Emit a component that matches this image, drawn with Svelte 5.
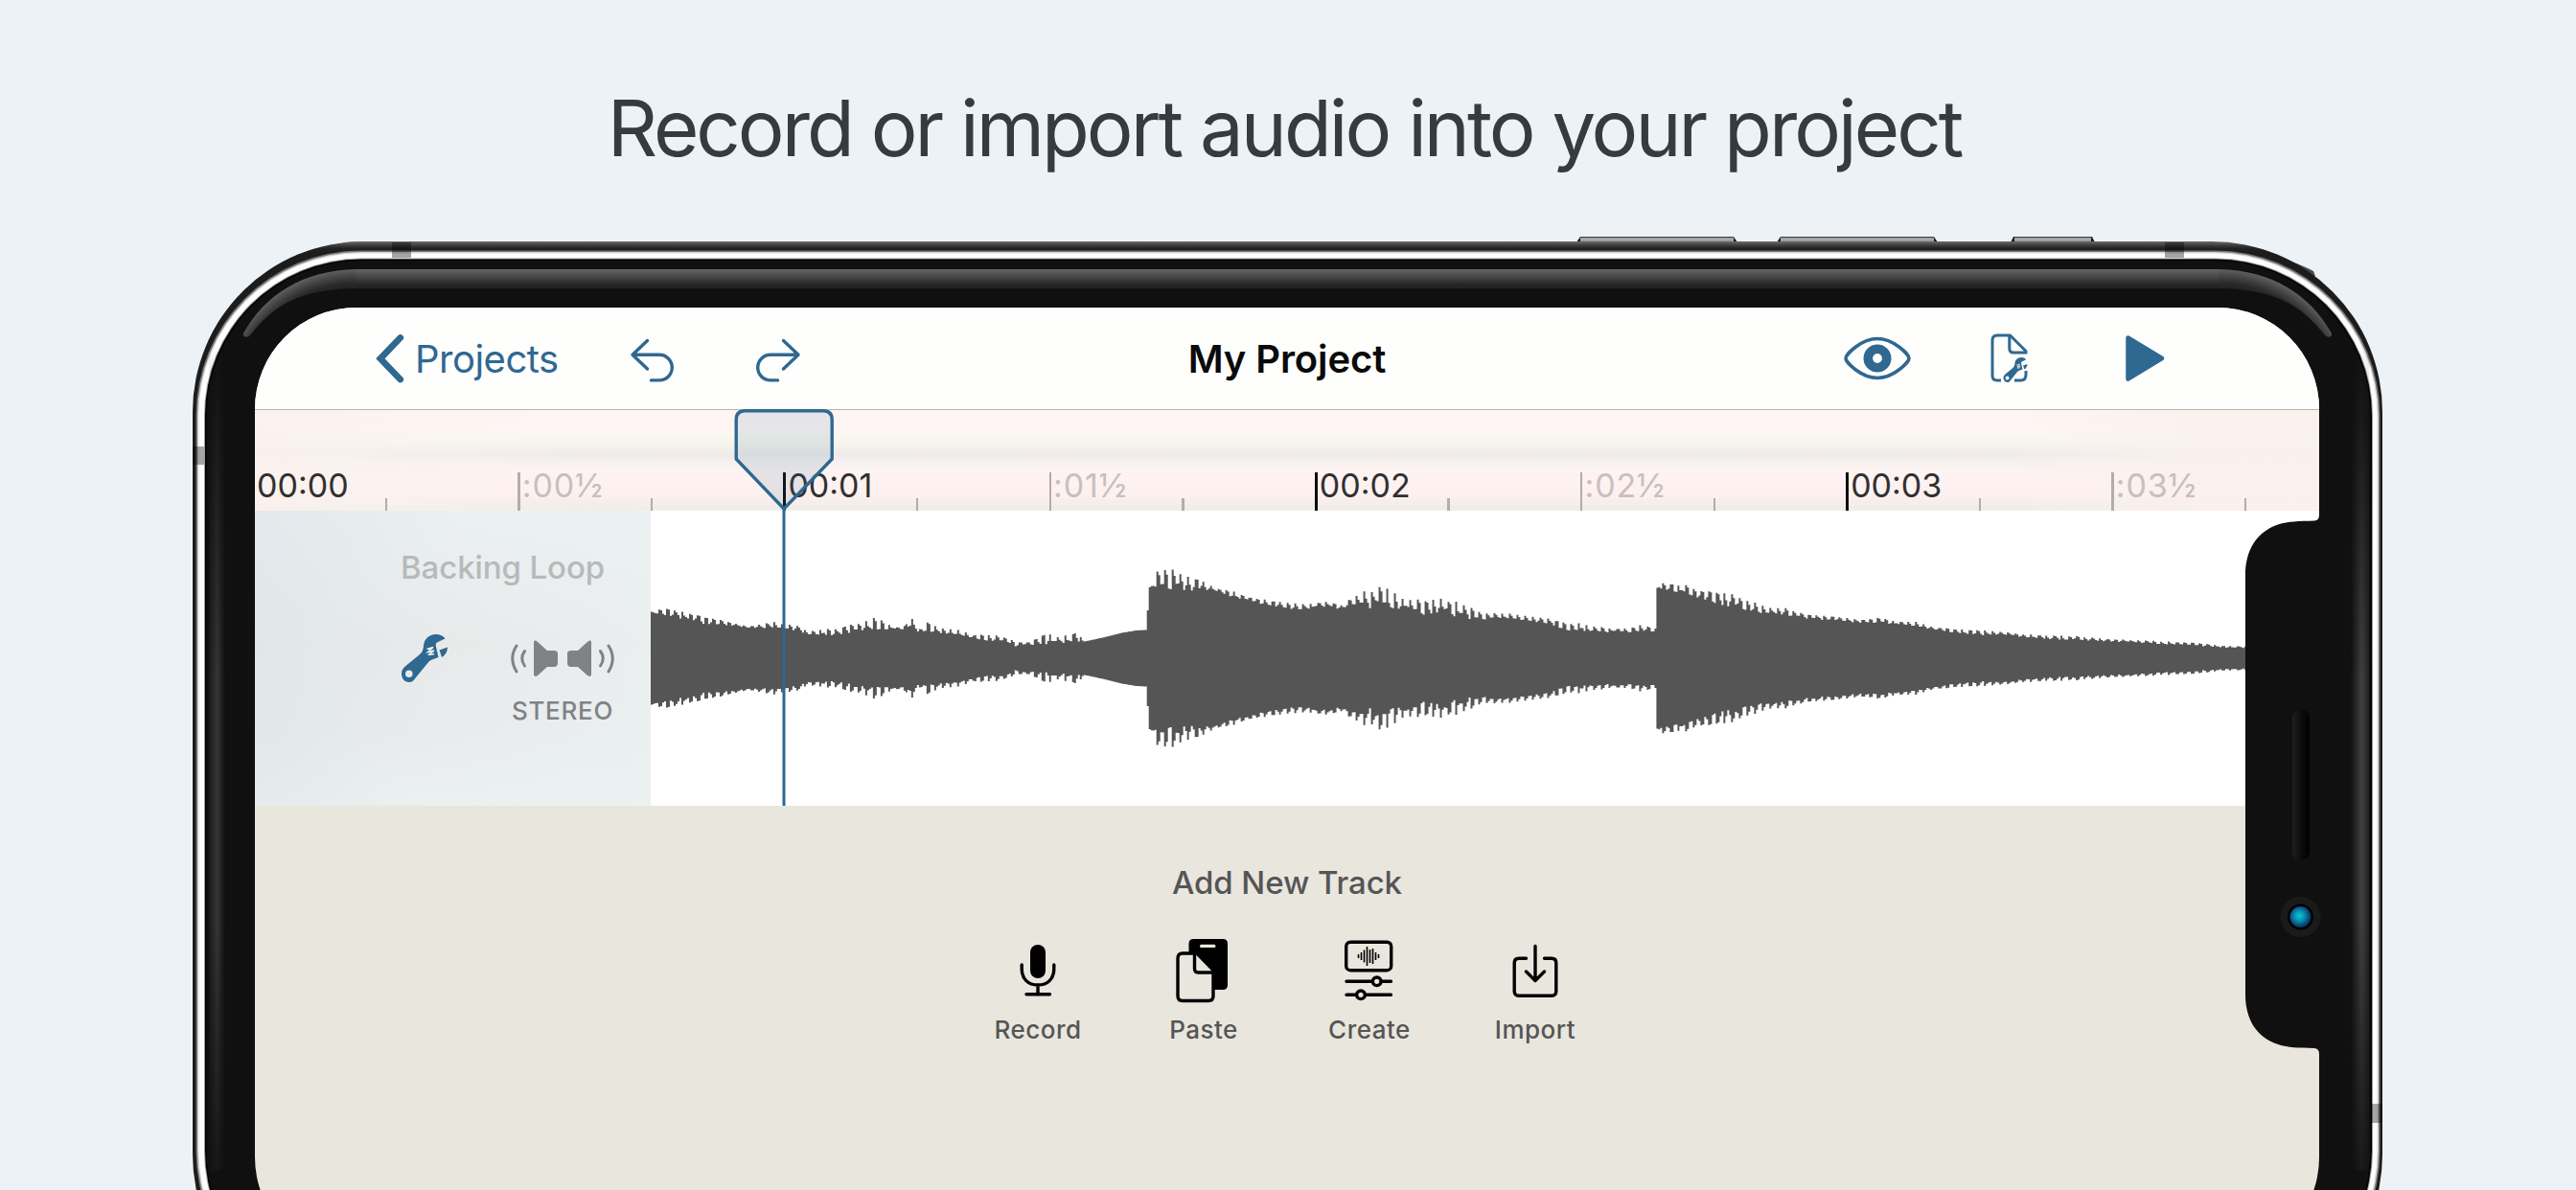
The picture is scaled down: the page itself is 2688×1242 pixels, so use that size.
<script lang="ts">
	interface Tick {
		kind: 'major' | 'half' | 'quarter';
		label: string;
	}

	const ticks: Tick[] = Array.from({ length: 16 }, (_, i) => {
		const sec = String(Math.floor(i / 4)).padStart(2, '0');
		if (i % 4 === 0) return { kind: 'major', label: `00:${sec}` };
		if (i % 4 === 2) return { kind: 'half', label: `:${sec}½` };
		return { kind: 'quarter', label: '' };
	});

	// x, body amplitude, peak amplitude
	const envelope: [number, number, number][] = [
		[0, 46, 49], [4, 44, 52], [20, 42, 52], [41, 41, 47], [58, 34, 43], [81, 34, 38], [101, 32, 33],
		[126, 31, 38], [151, 29, 34], [165, 24, 28], [191, 24, 31], [216, 28, 37], [235, 29, 43],
		[253, 31, 32], [264, 30, 34], [270, 30, 45], [279, 27, 30], [286, 26, 38], [303, 25, 32], [321, 23, 30],
		[336, 21, 24], [349, 18, 25], [371, 16, 22], [381, 12, 17], [396, 14, 17], [411, 14, 26],
		[426, 15, 22], [445, 17, 28], [450, 18, 19], [452, 17.5, 17.5], [471, 21.5, 21.5], [491, 26.5, 26.5],
		[506, 29, 29], [517, 29.5, 29.5], [518, 50, 50], [520, 74, 74], [527, 72, 89], [534, 71, 94],
		[545, 71, 93], [554, 70, 89], [564, 69, 85], [574, 72, 82], [588, 70, 73], [606, 63, 70],
		[621, 60, 64], [641, 55, 61], [661, 52, 58], [681, 50, 57], [706, 54, 59], [721, 50, 56],
		[732, 54, 65], [746, 52, 70], [759, 52, 74], [771, 49, 71], [783, 50, 63], [801, 46, 62],
		[813, 44, 61], [823, 48, 62], [839, 43, 59], [853, 40, 54], [866, 40, 47], [881, 42, 47],
		[901, 41, 46], [921, 38, 43], [938, 35, 41], [956, 28, 37], [971, 28, 37], [986, 26, 33],
		[1001, 27, 31], [1021, 27, 31], [1031, 27, 36], [1048, 28, 31], [1049, 72, 72], [1052, 71, 79],
		[1081, 66, 76], [1096, 62, 70], [1112, 56, 70], [1124, 54, 68], [1133, 52, 65], [1142, 50, 61],
		[1151, 47, 58], [1171, 47, 52], [1184, 45, 52], [1201, 42, 47], [1216, 40, 45], [1231, 40, 44],
		[1246, 38, 42], [1261, 37, 40], [1283, 36, 42], [1301, 35, 38], [1321, 32, 38], [1341, 29, 32],
		[1371, 25, 30], [1391, 24, 29], [1411, 24, 28], [1431, 22, 25], [1456, 20, 24], [1486, 19, 23],
		[1521, 17.5, 20], [1571, 15, 18], [1611, 13, 16], [1641, 11, 13], [1700, 10, 11]
	];

	const MID = 154;

	function sample(x: number): [number, number] {
		let i = 1;
		while (i < envelope.length - 1 && envelope[i][0] < x) i++;
		const [x0, b0, p0] = envelope[i - 1];
		const [x1, b1, p1] = envelope[i];
		const t = Math.min(1, (x - x0) / (x1 - x0));
		return [b0 + (b1 - b0) * t, p0 + (p1 - p0) * t];
	}

	function buildWave(width: number): string {
		let seed = 17;
		const rand = () => {
			seed = (seed * 16807) % 2147483647;
			return seed / 2147483647;
		};
		const top: string[] = [];
		const bottom: string[] = [];
		let n = 0;
		for (let x = 0; x < width; x += 2) {
			const [base, peak] = sample(x);
			const phase = n++ % 4;
			const w = phase === 0 ? 0.85 + rand() * 0.2 : phase === 1 ? 0.35 + rand() * 0.6 : rand() * 0.45;
			const a = base + (peak - base) * w;
			top.push(`${x},${(MID - a).toFixed(1)} ${x + 2},${(MID - a).toFixed(1)}`);
			bottom.unshift(`${x + 2},${(MID + a).toFixed(1)} ${x},${(MID + a).toFixed(1)}`);
		}
		return [...top, ...bottom].join(' ');
	}

	const wave = buildWave(1700);
	const miniBars = [4, 8, 13, 20, 14, 16, 8, 4];
</script>

{#snippet wrench()}
	<path
		fill-rule="evenodd"
		d="M0 41 C0 37 2 35 5 32.5 L19 21 C22 18 22.500 16 23 12 C23.500 4 30 0 36 0 C40 0 43.500 1.500 45.500 4.500 L37 8.500 C35.500 9.500 35.500 11 36 13 L38.500 24 C35 25.500 31 26 28.500 28.500 L15 45 C13 48 11 50 7.800 50 C3 50 0 46 0 41 Z M7.800 37.500 A3.800 3.800 0 1 0 7.800 45.100 A3.800 3.800 0 1 0 7.800 37.500 Z"
	/>
	<path d="M39.500 16.500 L48 13.500 C48 18 46 21.500 42 24 Z" />
	<path class="thread" d="M26.500 15.500 L33 13.500 L27.500 18.500 L34 17 L28 21.500 L34 20.500" />
{/snippet}

<div class="page">
	<h1>Record or import audio into your project</h1>

	<div class="phone">
		<svg class="frame" width="2285" height="1131" viewBox="0 0 2285 1131">
			<defs>
				<linearGradient id="rim" x1="0" y1="0" x2="0" y2="12" gradientUnits="userSpaceOnUse">
					<stop offset="0" stop-color="#6a6a6a" />
					<stop offset="0.3" stop-color="#424242" />
					<stop offset="0.6" stop-color="#222" />
					<stop offset="1" stop-color="#1c1c1c" />
				</linearGradient>
				<linearGradient id="shine" x1="0" y1="29" x2="0" y2="49" gradientUnits="userSpaceOnUse">
					<stop offset="0" stop-color="#646464" />
					<stop offset="0.4" stop-color="#474747" />
					<stop offset="0.8" stop-color="#252525" />
					<stop offset="1" stop-color="#202020" />
				</linearGradient>
				<radialGradient id="shineLeft" cx="170" cy="172" r="143" gradientUnits="userSpaceOnUse">
					<stop offset="0.86" stop-color="#222" />
					<stop offset="0.9" stop-color="#2a2a2a" />
					<stop offset="0.96" stop-color="#4a4a4a" />
					<stop offset="1" stop-color="#606060" />
				</radialGradient>
				<radialGradient id="shineRight" cx="2115" cy="172" r="143" gradientUnits="userSpaceOnUse">
					<stop offset="0.86" stop-color="#222" />
					<stop offset="0.9" stop-color="#2a2a2a" />
					<stop offset="0.96" stop-color="#4a4a4a" />
					<stop offset="1" stop-color="#606060" />
				</radialGradient>
				<linearGradient id="sideLeft">
					<stop offset="0" stop-color="#181818" />
					<stop offset="0.5" stop-color="#363636" />
					<stop offset="1" stop-color="#101010" />
				</linearGradient>
				<linearGradient id="sideRight">
					<stop offset="0" stop-color="#101010" />
					<stop offset="0.6" stop-color="#404040" />
					<stop offset="1" stop-color="#222" />
				</linearGradient>
				<linearGradient id="fadeV" x1="0" y1="0" x2="0" y2="1">
					<stop offset="0" stop-color="#fff" stop-opacity="0" />
					<stop offset="0.4" stop-color="#fff" />
					<stop offset="0.7" stop-color="#fff" />
					<stop offset="1" stop-color="#fff" stop-opacity="0.2" />
				</linearGradient>
				<mask id="sideFade">
					<rect x="0" y="110" width="2285" height="860" fill="url(#fadeV)" />
				</mask>
				<linearGradient id="button" x1="0" y1="0" x2="0" y2="1">
					<stop offset="0" stop-color="#666" />
					<stop offset="0.3" stop-color="#b4b4b4" />
					<stop offset="1" stop-color="#8c8c8c" />
				</linearGradient>
			</defs>

			<!-- side buttons -->
			<g fill="#1c1c1c">
				<path d="M1444 1 L1448 -5 H1608 L1612 1 Z" />
				<path d="M1653 1 L1657 -5 H1817 L1821 1 Z" />
				<path d="M1897 1 L1900 -5 H1982 L1985 1 Z" />
			</g>
			<g fill="url(#button)">
				<rect x="1448" y="-4.500" width="160" height="5" />
				<rect x="1657" y="-4.500" width="160" height="5" />
				<rect x="1901" y="-4.500" width="80" height="5" />
			</g>

			<!-- metal band -->
			<path d="M150 3 L165 0.500 H2080 C2130 2 2180 14 2213 31 L2215 36 L2160 40 H170 Z" fill="#4a4a4a" />
			<rect x="0" y="0" width="2285" height="1131" rx="178" ry="178" fill="url(#rim)" />
			<rect x="3.500" y="9.500" width="2279" height="1112" rx="172" ry="172" fill="#777" />
			<rect x="5" y="11" width="2276" height="1109" rx="171" ry="171" fill="#d8d8d8" />
			<rect x="6.500" y="12.500" width="2273" height="1106" rx="169" ry="169" fill="#fdfdfd" />
			<rect x="12" y="17.500" width="2263" height="1096" rx="164" ry="164" fill="#999" />
			<rect x="13" y="18.500" width="2261" height="1094" rx="163" ry="163" fill="#000" />
			<rect x="14.500" y="20" width="2258" height="1091" rx="162" ry="162" fill="#101010" />

			<!-- glass highlights -->
			<g mask="url(#sideFade)">
				<rect x="17" y="110" width="17" height="860" fill="url(#sideLeft)" />
				<rect x="2252" y="110" width="19" height="860" fill="url(#sideRight)" />
			</g>
			<rect x="170" y="29" width="1945" height="20" fill="url(#shine)" />
			<path d="M170.500 29 C115 30 75 56 53 96 C52 100 57 101 60 98 C85 66 112 50 170.500 49 Z" fill="url(#shineLeft)" />
			<path d="M2114.500 29 C2170 30 2210 56 2232 96 C2233 100 2228 101 2225 98 C2200 66 2173 50 2114.500 49 Z" fill="url(#shineRight)" />

			<!-- antenna bands -->
			<g fill="#000" opacity="0.35">
				<rect x="208" y="1" width="20" height="16" />
				<rect x="2058" y="1" width="20" height="16" />
				<rect x="0" y="214" width="12" height="19" />
				<rect x="2274" y="900" width="11" height="20" />
			</g>
		</svg>

		<div class="screen">
			<nav>
				<div class="nav-side">
					<svg class="chevron" width="30" height="52" viewBox="0 0 30 52">
						<path d="M25.700 4.500 L4.900 26.300 L25.700 48" />
					</svg>
					<span class="back">Projects</span>
					<svg class="undo" width="48" height="46" viewBox="0 0 48 46">
						<path d="M18.500 2.500 L3 17.300 L18.500 32 M3.500 17.300 H31 A13.300 13.300 0 0 1 31 43.900 H22.500" />
					</svg>
					<svg class="redo" width="48" height="46" viewBox="0 0 48 46">
						<path d="M29.500 2.500 L45 17.300 L29.500 32 M44.500 17.300 H16 A13.300 13.300 0 0 0 16 43.900 H23.500" />
					</svg>
				</div>
				<div class="nav-title">My Project</div>
				<div class="nav-side right">
					<svg class="eye" width="70" height="46" viewBox="0 0 70 46">
						<path class="line" d="M2 23 C2 19 18 2.500 35 2.500 C52 2.500 68 19 68 23 C68 27 52 43.500 35 43.500 C18 43.500 2 27 2 23 Z" />
						<circle class="iris" cx="35" cy="23" r="9.700" />
					</svg>
					<svg class="doc" width="40" height="52" viewBox="0 0 40 52">
						<path class="line" d="M11 49 H7 Q2 49 2 44 V7 Q2 2 7 2 H20.500 L37 18.500 V21.500 M19.800 2.500 V15.500 Q19.800 20 24 20 H36 M37 39 V43 Q37 49 31.500 49 H25" />
						<g transform="translate(13.5 25) scale(0.52)">{@render wrench()}</g>
					</svg>
					<svg class="play" width="43" height="50" viewBox="0 0 43 50">
						<path d="M3.500 3.500 L39 25 L3.500 46.500 Z" />
					</svg>
				</div>
			</nav>

			<div class="ruler">
				{#each ticks as tick}
					<div class="cell {tick.kind}">
						<i></i>
						{#if tick.label}<span>{tick.label}</span>{/if}
					</div>
				{/each}
			</div>

			<div class="track">
				<div class="track-head">
					<div class="track-name">Backing Loop</div>
					<div class="track-tools">
						<svg class="tool" width="50" height="52" viewBox="-1 -1 50 52">{@render wrench()}</svg>
						<div class="stereo">
							<svg width="108" height="40" viewBox="0 0 108 40">
								<path class="fill" d="M24 3 Q24 1 26 1.500 L28 3 L38 12 H45 Q49 12 49 15 V25 Q49 29 45 29 H38 L28 38 L26 39 Q24 39 24 37 Z" />
								<path class="fill" d="M84 3 Q84 1 82 1.500 L80 3 L70 12 H63 Q59 12 59 15 V25 Q59 29 63 29 H70 L80 38 L82 39 Q84 39 84 37 Z" />
								<path class="arc" d="M14.500 12.500 Q9 20 14.500 28 M6 7 Q-2.500 20 6 34 M93.500 12.500 Q99 20 93.500 28 M102 7 Q110.500 20 102 34" />
							</svg>
							<span>STEREO</span>
						</div>
					</div>
				</div>
				<svg class="wave" width="1742" height="308" viewBox="0 0 1742 308">
					<polygon points={wave} />
				</svg>
			</div>

			<section class="add">
				<h2>Add New Track</h2>
				<div class="actions">
					<button>
						<svg width="60" height="70" viewBox="0 0 60 70">
							<rect x="22" y="8" width="16" height="35" rx="8" />
							<path class="line" d="M13.200 29 V33 C13.200 44 20 50 30 50 C40 50 46.800 44 46.800 33 V29 M30 50 V60 M18 59.700 H42.500" />
						</svg>
						<span>Record</span>
					</button>
					<button>
						<svg width="60" height="70" viewBox="0 0 60 70">
							<path fill-rule="evenodd" d="M14.500 17 V7 Q14.500 2 19.500 2 H50 Q55 2 55 7 V50 Q55 55 50 55 H41 V38 L22 17 Z M27.500 7.800 Q26 7.800 26 9.500 Q26 11 27.500 11 H41 Q42.500 11 42.500 9.500 Q42.500 7.800 41 7.800 Z" />
							<path class="paper" d="M20.500 17 H8 Q3 17 3 22 V61.500 Q3 66.500 8 66.500 H35 Q40 66.500 40 61.500 V35.500 Z" />
							<path class="paper" d="M20.500 17 V33 Q20.500 37 24 37 H40" />
						</svg>
						<span>Paste</span>
					</button>
					<button>
						<svg width="60" height="70" viewBox="0 0 60 70">
							<rect class="line" x="5.700" y="5.200" width="47" height="29.500" rx="4.500" />
							{#each miniBars as h, i}
								<line class="bar" x1={18.500 + i * 3} x2={18.500 + i * 3} y1={20 - h / 2} y2={20 + h / 2} />
							{/each}
							<path class="line" d="M6 46.300 H33 M43 46.300 H52.500 M6 60.300 H16 M26 60.300 H52.500" />
							<circle class="line" cx="37.700" cy="46.300" r="4.300" />
							<circle class="line" cx="21" cy="60.300" r="4.300" />
						</svg>
						<span>Create</span>
					</button>
					<button>
						<svg width="60" height="70" viewBox="0 0 60 70">
							<path class="line" d="M20.500 22.300 H13 Q8.200 22.300 8.200 27 V56.500 Q8.200 61.300 13 61.300 H47 Q51.800 61.300 51.800 56.500 V27 Q51.800 22.300 47 22.300 H39.500 M30 9.500 V45 M20.500 36 L30 45.500 L39.500 36" />
						</svg>
						<span>Import</span>
					</button>
				</div>
			</section>

			<!-- playhead lies over ruler and track -->
			<svg class="playhead" width="108" height="416" viewBox="0 0 108 416">
				<path class="flag" d="M4.200 53 V12 Q4.200 2.700 13.500 2.700 H95 Q104.200 2.700 104.200 12 V53 L54 105 Z" />
				<line x1="54" x2="54" y1="105" y2="415" />
			</svg>
		</div>

		<svg class="notch" width="90" height="562" viewBox="0 0 90 562">
			<defs>
				<linearGradient id="speaker">
					<stop offset="0" stop-color="#202020" />
					<stop offset="0.5" stop-color="#0c0c0c" />
					<stop offset="1" stop-color="#000" />
				</linearGradient>
				<radialGradient id="lens" cx="0.45" cy="0.45" r="0.55">
					<stop offset="0" stop-color="#0cc" />
					<stop offset="0.4" stop-color="#0a94b8" />
					<stop offset="1" stop-color="#06305c" />
				</radialGradient>
			</defs>
			<path d="M90 0 H77 Q77 5 72 5.500 C55 6 45 6 34 9.500 C12 17 0 36 0 62 V500 C0 526 12 545 34 552 C45 555.500 55 555.500 72 556 Q77 556.500 77 562 H90 Z" fill="#101010" />
			<rect x="49" y="202" width="18" height="158" rx="9" fill="url(#speaker)" />
			<circle cx="57.500" cy="419" r="21" fill="#1a1a1a" />
			<circle cx="57.500" cy="419" r="13.500" fill="#000" />
			<circle cx="57.500" cy="419" r="11" fill="url(#lens)" />
		</svg>
	</div>
</div>

<style>
	:global(body) {
		margin: 0;
		background: #edf2f6;
	}
	.page {
		width: 2688px;
		height: 1242px;
		overflow: hidden;
		display: flex;
		flex-direction: column;
		background: #edf2f6;
		font-family: Inter, 'Liberation Sans', sans-serif;
	}
	h1 {
		margin: 0;
		height: 252px;
		line-height: 268px;
		flex-shrink: 0;
		padding-right: 8px;
		text-align: center;
		font-size: 81.4px;
		font-weight: 400;
		letter-spacing: -3px;
		color: #353c41;
		white-space: nowrap;
	}
	.phone {
		position: relative;
		width: 2285px;
		height: 1131px;
		flex-shrink: 0;
		margin-left: 201px;
	}
	.frame {
		position: absolute;
		inset: 0;
		overflow: visible;
	}
	.screen {
		position: relative;
		margin: 69px 0 0 65px;
		width: 2154px;
		height: 993px;
		border-radius: 106px;
		overflow: hidden;
		background: #e9e6de;
		display: flex;
		flex-direction: column;
	}

	/* ---- Nav ---- */
	nav {
		display: grid;
		grid-template-columns: 1fr auto 1fr;
		align-items: center;
		height: 107px;
		box-sizing: border-box;
		flex-shrink: 0;
		background: #fefefd;
		border-bottom: 1px solid #bdb4b4;
	}
	.nav-side {
		display: flex;
		align-items: center;
		padding-left: 126px;
		color: #2f6891;
	}
	.nav-side svg {
		flex-shrink: 0;
		fill: currentColor;
	}
	.nav-side.right {
		justify-content: flex-end;
		padding: 0 160px 0 0;
	}
	.nav-title {
		font-size: 40px;
		font-weight: 600;
		letter-spacing: -0.1px;
		color: #0a0a0a;
	}
	.back {
		font-size: 40px;
		letter-spacing: -0.5px;
		margin-left: 11px;
		width: 147px;
	}
	.chevron path,
	.undo path,
	.redo path,
	.line {
		fill: none;
		stroke: currentColor;
		stroke-width: 3.4;
		stroke-linecap: round;
		stroke-linejoin: round;
	}
	.nav-side .chevron path {
		stroke-width: 6.8;
		stroke-linejoin: miter;
	}
	.undo {
		margin: 4px 0 0 77px;
	}
	.redo {
		margin: 4px 0 0 83px;
	}
	.eye .iris {
		fill: none;
		stroke: currentColor;
		stroke-width: 9.6;
	}
	.eye .line {
		stroke-width: 3.6;
	}
	.doc {
		margin-left: 83px;
	}
	.doc .line {
		stroke-width: 3;
		stroke-linecap: butt;
	}
	.play {
		margin-left: 100px;
	}
	.play path {
		stroke: currentColor;
		stroke-width: 4.5;
		stroke-linejoin: round;
	}
	.thread {
		fill: none;
		stroke: #eef1f1;
		stroke-width: 1.5;
	}

	/* ---- Ruler ---- */
	.ruler {
		display: flex;
		height: 105px;
		flex-shrink: 0;
		background:
			linear-gradient(90deg, rgba(251, 241, 238, 0.9) 0, rgba(250, 243, 239, 0.5) 150px, transparent 330px, transparent 1830px, rgba(250, 241, 237, 0.9) 2040px),
			linear-gradient(#fef4f3 0, #fff6f5 18px, #faf7f0 27px, #f5f4ec 36px, #efebea 46px, #f6f1f0 54px, #fef3f2 66px, #fdf1f0 88px, #f1ece8 102px, #f5eeeb 105px);
	}
	.cell {
		display: flex;
		align-items: flex-end;
		width: 138.600px;
		flex-shrink: 0;
	}
	.cell:first-child {
		margin-left: -3px;
	}
	.cell i {
		width: 2.500px;
		height: 40px;
		flex-shrink: 0;
		background: #b3acab;
	}
	.cell.major i {
		width: 3px;
		background: #0c0c0c;
	}
	.cell.quarter i {
		height: 13px;
	}
	.cell span {
		margin-left: 2px;
		line-height: 52px;
		font-size: 34px;
		letter-spacing: 0.9px;
		white-space: nowrap;
		color: #c8bfbe;
	}
	.cell.major span {
		letter-spacing: 0;
		color: #303030;
	}

	/* ---- Track ---- */
	.track {
		display: flex;
		height: 308px;
		flex-shrink: 0;
		background: #fff;
	}
	.track-head {
		width: 413px;
		box-sizing: border-box;
		flex-shrink: 0;
		padding: 37px 0 0 152px;
		background:
			linear-gradient(100deg, rgba(214, 226, 231, 0.45), transparent 45%, rgba(236, 243, 243, 0.5)),
			linear-gradient(#ebf0f1, #e8eaea 45%, #e8ebec 75%, #ebf0f0);
	}
	.track-name {
		font-size: 33px;
		font-weight: 500;
		line-height: 44px;
		letter-spacing: -0.1px;
		color: #b7b9ba;
	}
	.track-tools {
		display: flex;
		margin-top: 47px;
	}
	.tool {
		fill: #2f6891;
	}
	.stereo {
		display: flex;
		flex-direction: column;
		align-items: center;
		width: 108px;
		margin: 6px 0 0 65px;
		color: #808285;
	}
	.stereo .fill {
		fill: currentColor;
	}
	.stereo .arc {
		fill: none;
		stroke: currentColor;
		stroke-width: 3;
		stroke-linecap: round;
	}
	.stereo span {
		margin-top: 18px;
		font-size: 26px;
		font-weight: 500;
		line-height: 34px;
		letter-spacing: 0.7px;
	}
	.wave {
		fill: #555;
	}

	/* ---- Add track ---- */
	.add {
		display: flex;
		flex-direction: column;
		align-items: center;
		padding-top: 58px;
	}
	h2 {
		margin: 0;
		font-size: 33px;
		font-weight: 500;
		line-height: 44px;
		letter-spacing: -0.1px;
		color: #555;
	}
	.actions {
		display: flex;
		margin: 35px 1px 0 0;
	}
	button {
		display: flex;
		flex-direction: column;
		align-items: center;
		width: 173px;
		padding: 0;
		border: 0;
		background: none;
		font-family: inherit;
		color: #000;
		cursor: pointer;
	}
	button span {
		margin-top: 10px;
		font-size: 26px;
		font-weight: 500;
		line-height: 34px;
		letter-spacing: 0.5px;
		color: #555;
	}
	.paper {
		fill: #e9e6de;
		stroke: #000;
		stroke-width: 3.4;
		stroke-linejoin: round;
	}
	.bar {
		stroke: #000;
		stroke-width: 1.6;
	}

	.playhead {
		position: absolute;
		left: 498px;
		top: 105px;
		fill: none;
		stroke: #2f6891;
		stroke-width: 3;
	}
	.flag {
		fill: rgba(47, 104, 145, 0.12);
		stroke-width: 3.4;
	}
	.notch {
		position: absolute;
		left: 2142px;
		top: 286px;
	}
</style>
